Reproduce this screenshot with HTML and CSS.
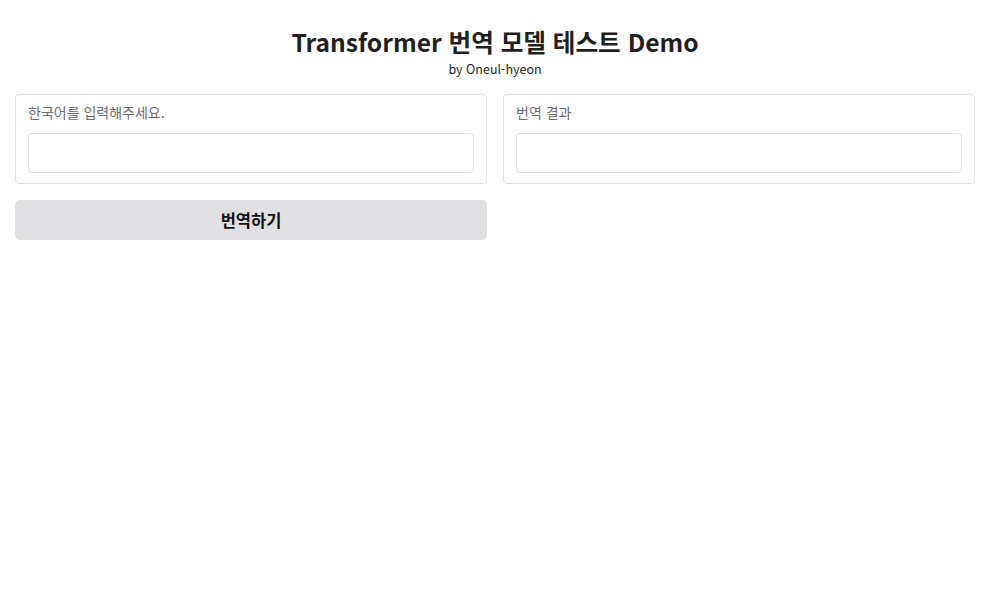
FILE: index.html
```html
<!DOCTYPE html>
<html lang="ko">
<head>
<meta charset="utf-8">
<title>Transformer 번역 모델 테스트 Demo</title>
<link rel="stylesheet" href="styles.css">
</head>
<body>
<div class="app">
  <header class="head">
    <h1 class="title">Transformer 번역 모델 테스트 Demo</h1>
    <p class="sub">by Oneul-hyeon</p>
  </header>
  <div class="row">
    <div class="col">
      <label class="panel">
        <span class="label">한국어를 입력해주세요.</span>
        <input class="field" type="text">
      </label>
      <button class="btn" type="button">번역하기</button>
    </div>
    <div class="col">
      <label class="panel">
        <span class="label">번역 결과</span>
        <input class="field" type="text">
      </label>
    </div>
  </div>
</div>
</body>
</html>
```
FILE: styles.css
```css
html, body {
  margin: 0;
  padding: 0;
  background: #ffffff;
}
body {
  font-family: "Noto Sans CJK KR", "Noto Sans", sans-serif;
  color: #1f2937;
}
.app {
  width: 960px;
  margin: 0 18px 0 15px;
  padding: 25px 0 0 0;
}
.head {
  text-align: center;
}
.title {
  margin: 0;
  font-size: 24.6px;
  font-weight: 700;
  line-height: 32px;
  color: #1f1f1f;
}
.sub {
  margin: 3px 0 0 0;
  font-size: 12.5px;
  line-height: 18px;
  color: #1f1f1f;
}
.row {
  margin-top: 16px;
  display: flex;
  gap: 16px;
  align-items: flex-start;
}
.col {
  flex: 1 1 0;
  display: flex;
  flex-direction: column;
  gap: 16px;
}
.panel {
  display: flex;
  flex-direction: column;
  gap: 11px;
  border: 1px solid #e0e0e2;
  border-radius: 4px;
  padding: 7px 12px 10px 12px;
  background: #fff;
}
.label {
  font-size: 14px;
  line-height: 20px;
  color: #6b6b72;
}
.field {
  box-sizing: border-box;
  height: 40px;
  width: 100%;
  border: 1px solid #dedee2;
  border-radius: 4px;
  background: #fff;
  outline: none;
  font: inherit;
}
.btn {
  height: 40px;
  border: none;
  border-radius: 5px;
  background: #e0e0e2;
  font-family: "Noto Sans CJK KR", "Noto Sans", sans-serif;
  font-size: 16.5px;
  font-weight: 700;
  color: #111;
  cursor: pointer;
}
```
